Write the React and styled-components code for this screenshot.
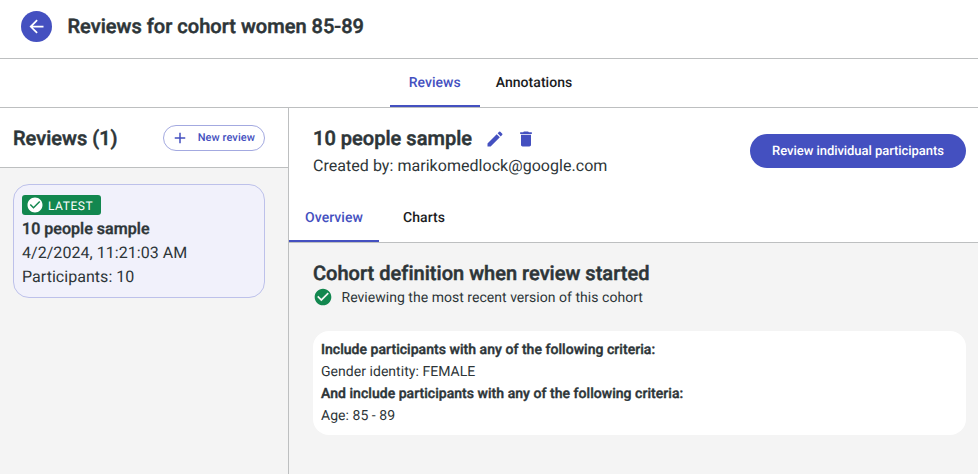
import React from "react";
import styled, { createGlobalStyle } from "styled-components";
import { MdArrowBack, MdAdd, MdEdit, MdDelete, MdCheckCircle } from "react-icons/md";

const INDIGO = "#4450c0";
const GREEN = "#12874f";
const INK = "#2d3538";
const LINE = "#bdbfc0";

const GlobalStyle = createGlobalStyle`
  * { box-sizing: border-box; }
  body {
    margin: 0;
    background: #fff;
    color: ${INK};
    font-family: Roboto, sans-serif;
    font-size: 16px;
    -webkit-font-smoothing: antialiased;
    text-rendering: geometricPrecision;
  }
  button { font-family: inherit; cursor: pointer; text-rendering: inherit; }
  h1, h2, p { margin: 0; }
`;

const Page = styled.div`
  display: flex;
  flex-direction: column;
  height: 474px;
  overflow: hidden;
`;

const Header = styled.header`
  display: flex;
  align-items: center;
  gap: 15.5px;
  height: 59px;
  padding: 0 21px 6px;
  border-bottom: 1px solid ${LINE};
`;

const BackButton = styled.button`
  display: grid;
  place-items: center;
  width: 31px;
  height: 31px;
  padding: 0;
  border: 0;
  border-radius: 50%;
  background: ${INDIGO};
  color: #fff;
`;

const Title = styled.h1`
  font-size: 20px;
  line-height: 24px;
  font-weight: 500;
  letter-spacing: 0.03px;
  -webkit-text-stroke: 0.5px ${INK};
  white-space: nowrap;
`;

const Tabs = styled.nav`
  display: flex;
  justify-content: ${(p) => (p.$centered ? "center" : "flex-start")};
  height: 49px;
  border-bottom: 1px solid ${LINE};
`;

const Tab = styled.button`
  min-width: 90px;
  padding: 2px 16px 0;
  border: 0;
  border-bottom: 2px solid ${(p) => (p.$active ? INDIGO : "transparent")};
  background: none;
  color: ${(p) => (p.$active ? INDIGO : "#1b1c1e")};
  font-size: 14px;
  font-weight: 500;
  letter-spacing: 0.04px;
`;

const Body = styled.div`
  display: flex;
  flex: 1;
`;

const Sidebar = styled.aside`
  width: 289px;
  border-right: 1px solid ${LINE};
  background: #f4f4f4;
`;

const SidebarHeader = styled.div`
  display: flex;
  align-items: center;
  justify-content: space-between;
  height: 60px;
  padding: 0 23px 0 13px;
  border-bottom: 1px solid ${LINE};
  background: #fff;
`;

const NewReviewButton = styled.button`
  display: flex;
  align-items: center;
  justify-content: space-between;
  width: 102px;
  height: 26px;
  padding: 0 9px 0 7px;
  border: 1px solid #a3a9e0;
  border-radius: 13px;
  background: #fff;
  color: ${INDIGO};
  font-size: 11px;
  font-weight: 500;
  letter-spacing: 0.08px;
  white-space: nowrap;
`;

const ReviewCard = styled.article`
  width: 252px;
  height: 114px;
  margin: 16px 0 0 13px;
  padding: 10px 8px;
  border: 1px solid #bdc1ea;
  border-radius: 16px;
  background: #f1f1fb;
`;

const LatestBadge = styled.span`
  display: flex;
  align-items: center;
  gap: 4px;
  width: 79px;
  height: 20px;
  padding-left: 4px;
  border-radius: 3px;
  background: ${GREEN};
  color: #fff;
  font-size: 12px;
  letter-spacing: 0.55px;
`;

const BadgeLabel = styled.span`
  padding-top: 2px;
  line-height: 16px;
`;

const CardTitle = styled.h2`
  margin-top: 2px;
  font-size: 16px;
  line-height: 24px;
  font-weight: 500;
  letter-spacing: 0.04px;
  -webkit-text-stroke: 0.4px ${INK};
`;

const BodyText = styled.p`
  font-size: 16px;
  line-height: 24px;
  letter-spacing: 0.04px;
`;

const Main = styled.main`
  display: flex;
  flex: 1;
  flex-direction: column;
  min-width: 0;
`;

const ReviewHeader = styled.section`
  display: flex;
  align-items: flex-start;
  justify-content: space-between;
  height: 86px;
  padding: 18px 12px 0 24px;
`;

const TitleRow = styled.div`
  display: flex;
  align-items: center;
  height: 24px;
  margin-bottom: 4px;

  ${Title} { margin-right: 13px; }
`;

const IconButton = styled.button`
  display: grid;
  place-items: center;
  width: 20px;
  height: 20px;
  margin: 2px 11px 0 0;
  padding: 0;
  border: 0;
  background: none;
  color: ${INDIGO};
`;

const PrimaryButton = styled.button`
  width: 216px;
  height: 34px;
  margin-top: 8px;
  padding: 0;
  border: 0;
  border-radius: 17px;
  background: ${INDIGO};
  color: #fff;
  font-size: 13px;
  font-weight: 500;
  letter-spacing: -0.05px;
`;

const Overview = styled.section`
  flex: 1;
  padding: 18px 12px 0 24px;
  background: #f4f4f4;
`;

const Status = styled.div`
  display: flex;
  align-items: center;
  gap: 8.5px;
  height: 24px;
  font-size: 14px;
  letter-spacing: 0.03px;

  svg { color: ${GREEN}; }
`;

const StatusText = styled.span`
  padding-top: 2px;
  line-height: 22px;
`;

const CriteriaPanel = styled.div`
  height: 104px;
  margin-top: 22px;
  padding: 8px;
  border-radius: 16px;
  background: #fff;
`;

const Criterion = styled.p`
  font-size: 14px;
  line-height: 22px;
  font-weight: ${(p) => (p.$strong ? 500 : 400)};
  letter-spacing: 0.04px;
  -webkit-text-stroke: ${(p) => (p.$strong ? "0.4px" : "0")} ${INK};
`;

export default function App() {
  return (
    <>
      <GlobalStyle />
      <Page>
        <Header>
          <BackButton aria-label="Back"><MdArrowBack size={21} /></BackButton>
          <Title>Reviews for cohort women 85-89</Title>
        </Header>
        <Tabs $centered>
          <Tab $active>Reviews</Tab>
          <Tab>Annotations</Tab>
        </Tabs>
        <Body>
          <Sidebar>
            <SidebarHeader>
              <Title>Reviews (1)</Title>
              <NewReviewButton><MdAdd size={18} />New review</NewReviewButton>
            </SidebarHeader>
            <ReviewCard>
              <LatestBadge><MdCheckCircle size={18} /><BadgeLabel>LATEST</BadgeLabel></LatestBadge>
              <CardTitle>10 people sample</CardTitle>
              <BodyText>4/2/2024, 11:21:03 AM</BodyText>
              <BodyText>Participants: 10</BodyText>
            </ReviewCard>
          </Sidebar>
          <Main>
            <ReviewHeader>
              <div>
                <TitleRow>
                  <Title>10 people sample</Title>
                  <IconButton aria-label="Edit"><MdEdit size={20} /></IconButton>
                  <IconButton aria-label="Delete"><MdDelete size={20} /></IconButton>
                </TitleRow>
                <BodyText>Created by: marikomedlock@google.com</BodyText>
              </div>
              <PrimaryButton>Review individual participants</PrimaryButton>
            </ReviewHeader>
            <Tabs>
              <Tab $active>Overview</Tab>
              <Tab>Charts</Tab>
            </Tabs>
            <Overview>
              <Title>Cohort definition when review started</Title>
              <Status>
                <MdCheckCircle size={20} />
                <StatusText>Reviewing the most recent version of this cohort</StatusText>
              </Status>
              <CriteriaPanel>
                <Criterion $strong>Include participants with any of the following criteria:</Criterion>
                <Criterion>Gender identity: FEMALE</Criterion>
                <Criterion $strong>And include participants with any of the following criteria:</Criterion>
                <Criterion>Age: 85 - 89</Criterion>
              </CriteriaPanel>
            </Overview>
          </Main>
        </Body>
      </Page>
    </>
  );
}
